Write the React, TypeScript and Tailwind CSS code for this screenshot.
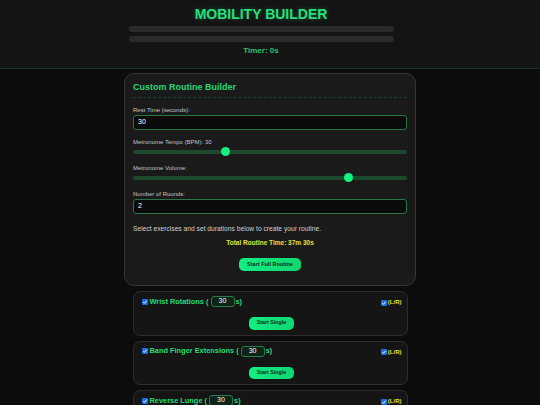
import React from "react";

const font = { fontFamily: '"Liberation Sans", Arial, sans-serif' };

function Check() {
  return (
    <span className="inline-flex h-[6px] w-[6px] shrink-0 items-center justify-center rounded-[1px] bg-[#1a6fe6]">
      <svg viewBox="0 0 10 10" className="h-[6px] w-[6px]">
        <path d="M2.2 5.2 L4.2 7.2 L7.8 2.8" fill="none" stroke="#fff" strokeWidth="1.6" />
      </svg>
    </span>
  );
}

function Slider({ left }: { left: number }) {
  return (
    <div className="relative mt-[1px] h-[9px]">
      <div className="absolute left-0 right-0 top-[3px] h-[4px] rounded-full bg-[#1c4a2e]" />
      <div
        className="absolute top-0 h-[9px] w-[9px] rounded-full bg-[#12f27e]"
        style={{ left }}
      />
    </div>
  );
}

function Exercise({ name }: { name: string }) {
  return (
    <div className="mt-[5px] rounded-[7px] border border-[#2c2c2c] bg-[#151515] pb-[5px] pl-[8px] pr-[5px] pt-[4px]">
      <div className="flex h-[11px] items-center justify-between">
        <div className="flex items-center gap-[1px] text-[7.4px] font-bold text-[#22dd77]">
          <Check />
          <span className="ml-[1px]">{name} (</span>
          <span className="ml-[1px] flex h-[11px] w-[24px] items-center justify-center rounded-[3px] border border-[#2b7a4b] bg-[#0f2418] text-[7px] font-normal text-white">
            30
          </span>
          <span>s)</span>
        </div>
        <div className="flex items-center gap-[1px] self-start pt-[2px] text-[6px] font-bold text-[#e2e23a]">
          <Check />
          <span>(L/R)</span>
        </div>
      </div>
      <div className="mt-[10px] flex justify-center">
        <div className="flex h-[12.5px] w-[45px] items-center justify-center rounded-[5px] bg-gradient-to-r from-[#14ee82] to-[#0fd670] text-[5.3px] font-bold text-[#0d2a18]">
          Start Single
        </div>
      </div>
    </div>
  );
}

export default function App() {
  return (
    <div className="h-[405px] w-[540px] overflow-hidden bg-[#0c0c0c]" style={font}>
      <header className="border-b border-[#173325] bg-[#141414] pb-[12px] pr-[18px] pt-[6px]">
        <div className="flex flex-col items-center">
          <h1
            className="text-[14px] font-bold leading-[16px] text-[#2ade7c]"
            style={{ textShadow: "0 0 4px rgba(40,222,124,0.35)" }}
          >
            MOBILITY BUILDER
          </h1>
          <div className="mt-[4px] h-[6px] w-[265px] rounded-full bg-[#2a2a2a]" />
          <div className="mt-[4px] h-[6px] w-[265px] rounded-full bg-[#2a2a2a]" />
          <div className="mt-[4px] text-[8px] font-bold leading-[10px] text-[#27c46e]">Timer: 0s</div>
        </div>
      </header>

      <div className="mx-auto mt-[4px] w-[292px] rounded-[10px] border border-[#363636] bg-[#1a1a1a] px-[8px] pb-[14px] pt-[8px]">
        <div className="border-b border-dashed border-[#1a3f29] pb-[4px] text-[9px] font-bold leading-[11px] text-[#26d775]">
          Custom Routine Builder
        </div>

        <div className="mt-[8px] text-[6px] leading-[8px] text-[#c4c4c4]">Rest Time (seconds):</div>
        <div className="mt-[1px] flex h-[15px] items-center rounded-[3px] border border-[#2a7447] bg-[#0b0b0b] pl-[4px] text-[7px] text-white">
          30
        </div>

        <div className="mt-[8px] text-[6px] leading-[8px] text-[#c4c4c4]">Metronome Tempo (BPM): 30</div>
        <Slider left={88} />

        <div className="mt-[8px] text-[6px] leading-[8px] text-[#c4c4c4]">Metronome Volume:</div>
        <Slider left={211} />

        <div className="mt-[8px] text-[6px] leading-[8px] text-[#c4c4c4]">Number of Rounds:</div>
        <div className="mt-[1px] flex h-[15px] items-center rounded-[3px] border border-[#2a7447] bg-[#0b0b0b] pl-[4px] text-[7px] text-white">
          2
        </div>

        <div className="mt-[11px] text-[6.7px] leading-[8px] text-[#cfcfcf]">
          Select exercises and set durations below to create your routine.
        </div>
        <div className="mt-[5px] text-center text-[6.5px] font-bold leading-[9px] text-[#e2e23a]">
          Total Routine Time: 37m 30s
        </div>
        <div className="mt-[11px] flex justify-center">
          <div className="flex h-[13px] w-[62px] items-center justify-center rounded-[5px] bg-gradient-to-r from-[#14ee82] to-[#0fd670] text-[5.5px] font-bold text-[#0d2a18]">
            Start Full Routine
          </div>
        </div>
      </div>

      <div className="mx-auto w-[275px]">
        <Exercise name="Wrist Rotations" />
        <Exercise name="Band Finger Extensions" />
        <Exercise name="Reverse Lunge" />
      </div>
    </div>
  );
}
